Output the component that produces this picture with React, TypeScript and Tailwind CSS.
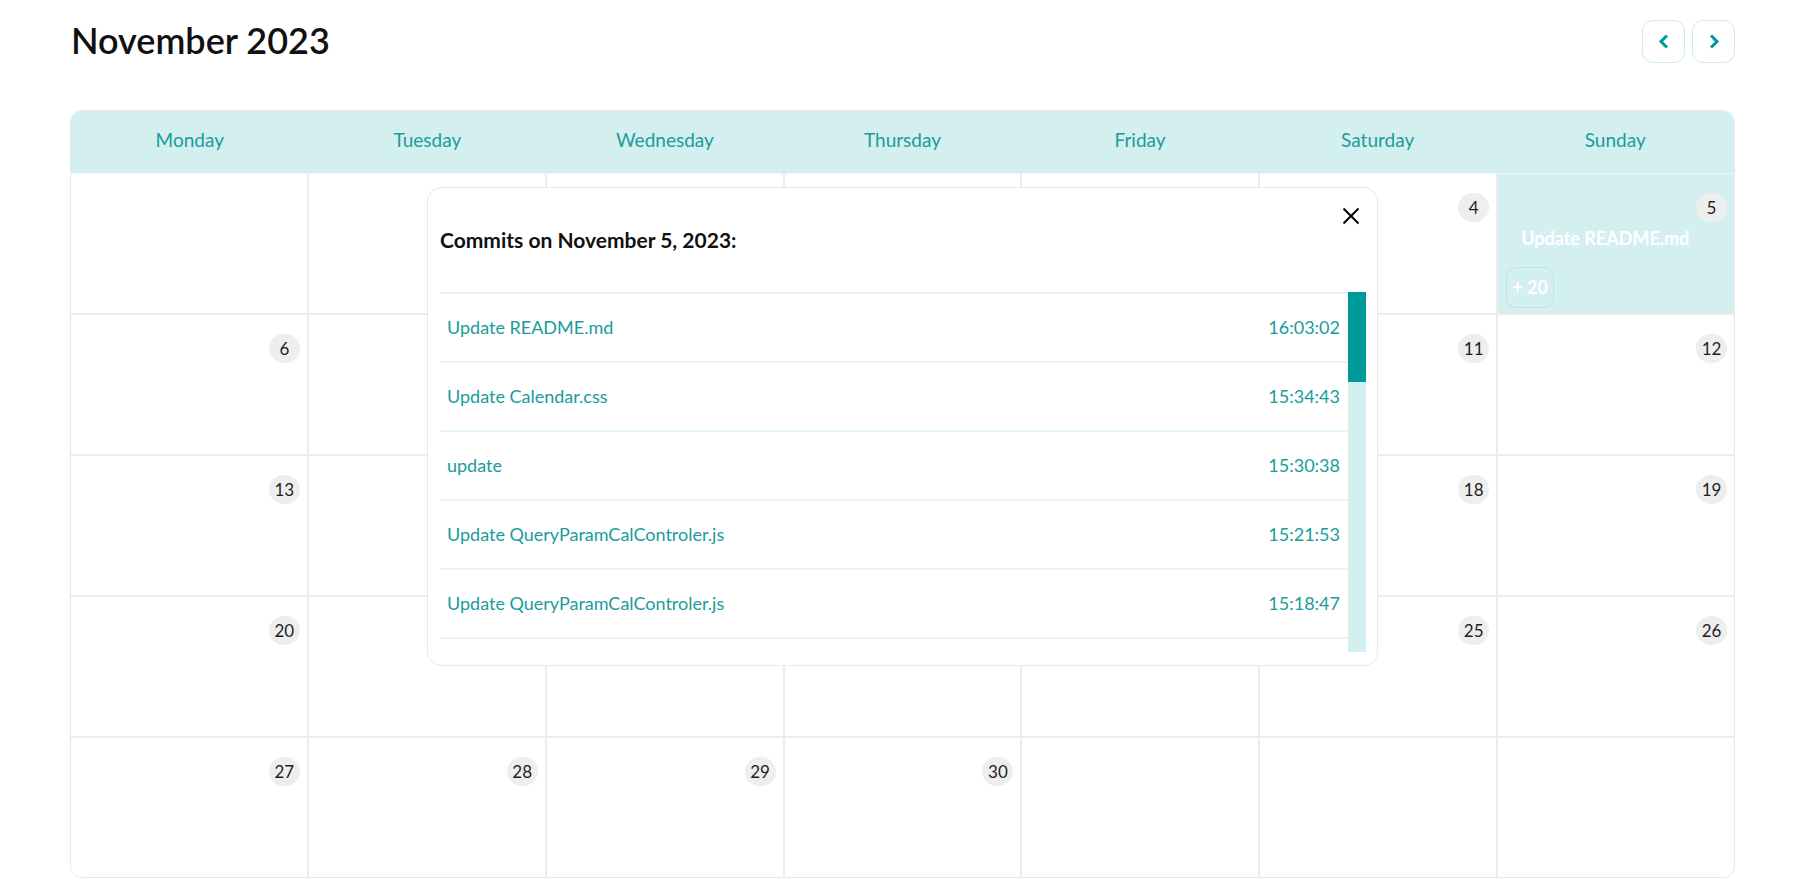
import React from "react";

const weekDays = ["Monday", "Tuesday", "Wednesday", "Thursday", "Friday", "Saturday", "Sunday"];

const weeks: (number | null)[][] = [
  [null, null, 1, 2, 3, 4, 5],
  [6, 7, 8, 9, 10, 11, 12],
  [13, 14, 15, 16, 17, 18, 19],
  [20, 21, 22, 23, 24, 25, 26],
  [27, 28, 29, 30, null, null, null],
];

const commits = [
  { msg: "Update README.md", time: "16:03:02" },
  { msg: "Update Calendar.css", time: "15:34:43" },
  { msg: "update", time: "15:30:38" },
  { msg: "Update QueryParamCalControler.js", time: "15:21:53" },
  { msg: "Update QueryParamCalControler.js", time: "15:18:47" },
];

function DayBadge({ n }: { n: number }) {
  return (
    <div className="self-end w-[31px] h-[29px] rounded-full bg-[#eeeeee] flex items-center justify-center text-[17px] text-[#1e1e1e] leading-none">
      {n}
    </div>
  );
}

function Cell({ n }: { n: number | null }) {
  const active = n === 5;
  return (
    <div
      className={
        "h-[139px] flex flex-col pt-[19px] pr-[7px] pl-[8px] " +
        (active ? "bg-[#d4eff0]" : "bg-white")
      }
    >
      {n !== null && <DayBadge n={n} />}
      {active && (
        <>
          <div className="mt-[4px] ml-[15px] text-[18px] leading-[24px] font-bold text-white">
            Update README.md
          </div>
          <div className="mt-[17px] w-[48px] h-[41px] rounded-[10px] border border-[#b9e4e5] flex items-center justify-center text-[18px] font-bold text-white">
            + 20
          </div>
        </>
      )}
    </div>
  );
}

export default function App() {
  return (
    <div className="relative h-[878px] overflow-hidden bg-white font-[Lato,sans-serif]">
      <div className="ml-[70px] w-[1665px] pt-[20px]">
        <div className="flex items-center justify-between h-[43px]">
          <h1 className="text-[36px] leading-none text-[#111111] font-semibold ml-[1px] -mt-[4px]">November 2023</h1>
          <div className="flex gap-[7px]">
            <button className="w-[43px] h-[43px] rounded-[11px] border border-[#cdeced] bg-white flex items-center justify-center">
              <svg width="12" height="15" viewBox="0 0 12 15">
                <polyline points="9,1.5 3,7.5 9,13.5" fill="none" stroke="#009999" strokeWidth="3" />
              </svg>
            </button>
            <button className="w-[43px] h-[43px] rounded-[11px] border border-[#cdeced] bg-white flex items-center justify-center">
              <svg width="12" height="15" viewBox="0 0 12 15">
                <polyline points="3,1.5 9,7.5 3,13.5" fill="none" stroke="#009999" strokeWidth="3" />
              </svg>
            </button>
          </div>
        </div>

        <div className="mt-[47px] rounded-[12px] border border-[#e8e8e8] overflow-hidden">
          <div className="grid grid-cols-7 h-[63px] bg-[#d4eff0] border-b border-[#ecf8f8]">
            {weekDays.map((d) => (
              <div key={d} className="flex items-center justify-center pb-[4px] text-[19px] text-[#1a9c9c]">
                {d}
              </div>
            ))}
          </div>
          <div className="grid grid-cols-7 gap-[2px] bg-[#ececec]">
            {weeks.flat().map((n, i) => (
              <Cell key={i} n={n} />
            ))}
          </div>
        </div>
      </div>

      <div className="absolute left-[427px] top-[187px] w-[951px] h-[479px] bg-white rounded-[14px] border border-[#d9f0f0] flex flex-col pl-[12px] pr-[11px] pb-[13px]">
        <div className="relative h-[104px] shrink-0">
          <button className="absolute right-[6px] top-[19px] w-[18px] h-[18px]">
            <svg width="18" height="18" viewBox="0 0 18 18">
              <line x1="1.5" y1="1.5" x2="16.5" y2="16.5" stroke="#000" strokeWidth="2" />
              <line x1="16.5" y1="1.5" x2="1.5" y2="16.5" stroke="#000" strokeWidth="2" />
            </svg>
          </button>
          <div className="absolute left-0 top-[39px] text-[21px] leading-[26px] font-bold text-[#111111]">
            Commits on November 5, 2023:
          </div>
        </div>
        <div className="flex flex-1 min-h-0">
          <div className="flex-1 overflow-hidden border-t-2 border-[#e6f5f5]">
            {commits.map((c, i) => (
              <div
                key={i}
                className="h-[69px] flex items-center justify-between pl-[7px] pr-[8px] border-b-2 border-[#e6f5f5] text-[18px] text-[#1a9c9c]"
              >
                <span>{c.msg}</span>
                <span>{c.time}</span>
              </div>
            ))}
            <div className="h-[69px] border-b-2 border-[#e6f5f5]" />
          </div>
          <div className="w-[18px] bg-[#d4eff0] flex flex-col">
            <div className="h-[90px] bg-[#009999]" />
          </div>
        </div>
      </div>
    </div>
  );
}
